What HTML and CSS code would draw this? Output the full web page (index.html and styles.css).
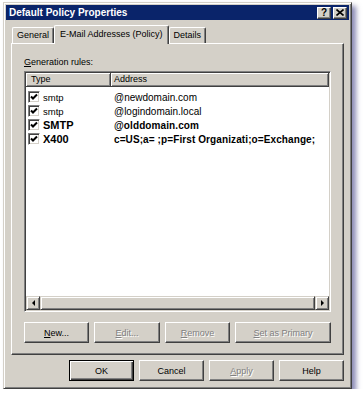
FILE: index.html
```html
<!DOCTYPE html>
<html lang="en">
<head>
	<meta charset="UTF-8">
	<title>Default Policy Properties</title>
	<link rel="stylesheet" href="styles.css">
</head>
<body>

	<div class="window">
		<div class="titlebar">
			<span class="title">Default Policy Properties</span>
			<span class="caption">
				<span class="cbtn">?</span>
				<span class="cbtn">
					<svg width="8" height="7" viewBox="0 0 8 7"><path d="M0.5 0.5 L7.5 6.5 M7.5 0.5 L0.5 6.5" stroke="#000" stroke-width="1.6"/></svg>
				</span>
			</span>
		</div>

		<div class="content">
			<div class="tabs">
				<div class="tab">General</div>
				<div class="tab active">E-Mail Addresses (Policy)</div>
				<div class="tab">Details</div>
			</div>

			<div class="panel">
				<div class="label"><u>G</u>eneration rules:</div>

				<div class="listview">
					<div class="lv-header">
						<div class="col col-type">Type</div>
						<div class="col col-addr">Address</div>
					</div>

					<div class="lv-rows">
						<div class="row">
							<div class="cell-type"><span class="check"></span>smtp</div>
							<div class="cell-addr">@newdomain.com</div>
						</div>
						<div class="row">
							<div class="cell-type"><span class="check"></span>smtp</div>
							<div class="cell-addr">@logindomain.local</div>
						</div>
						<div class="row bold">
							<div class="cell-type"><span class="check"></span>SMTP</div>
							<div class="cell-addr">@olddomain.com</div>
						</div>
						<div class="row bold">
							<div class="cell-type"><span class="check"></span>X400</div>
							<div class="cell-addr">c=US;a= ;p=First Organizati;o=Exchange;</div>
						</div>
					</div>

					<div class="hscroll">
						<div class="sb-btn"><span class="arrow-left"></span></div>
						<div class="sb-thumb"></div>
						<div class="sb-btn"><span class="arrow-right"></span></div>
					</div>
				</div>

				<div class="panel-buttons">
					<div class="btn w-new"><u>N</u>ew...</div>
					<div class="btn w-edit disabled"><u>E</u>dit...</div>
					<div class="btn w-remove disabled"><u>R</u>emove</div>
					<div class="btn w-primary disabled"><u>S</u>et as Primary</div>
				</div>
			</div>

			<div class="dialog-buttons">
				<div class="btn default">OK</div>
				<div class="btn">Cancel</div>
				<div class="btn disabled"><u>A</u>pply</div>
				<div class="btn">Help</div>
			</div>
		</div>
	</div>

</body>
</html>
```

FILE: styles.css
```css
* {
	box-sizing: border-box;
}

body {
	margin: 0;
	padding: 2px 0 0 3px;
	background: #fff;
	font-family: "Liberation Sans", Arial, sans-serif;
	font-size: 9px;
	color: #000;
}

/********** window frame **********/
.window {
	width: 349px;
	height: 387px;
	padding: 2px;
	background: #d4d0c8;
	border: 1px solid;
	border-color: #d4d0c8 #404040 #404040 #d4d0c8;
	box-shadow: inset 1px 1px #fff, inset -1px -1px #808080, 4px 4px 5px rgba(60, 60, 130, 0.6);
}

.titlebar {
	display: flex;
	align-items: center;
	justify-content: space-between;
	height: 15px;
	padding: 0 2px 0 3px;
	background: #0a246a;
	color: #fff;
	font-size: 10px;
	font-weight: bold;
}

.caption {
	display: flex;
	gap: 2px;
}

.cbtn {
	display: flex;
	align-items: center;
	justify-content: center;
	width: 14px;
	height: 12px;
	background: #d4d0c8;
	color: #000;
	font-size: 10px;
	border: 1px solid;
	border-color: #fff #404040 #404040 #fff;
	box-shadow: inset -1px -1px #808080;
}

.content {
	padding: 5px 5px 0 5px;
}

/********** tabs **********/
.tabs {
	position: relative;
	z-index: 1;
	display: flex;
	align-items: flex-end;
	height: 18px;
	padding-left: 1px;
}

.tab {
	height: 16px;
	padding: 0 4px;
	line-height: 15px;
	border-top: 1px solid #fff;
	border-left: 1px solid #fff;
	border-right: 1px solid #404040;
	border-radius: 2px 2px 0 0;
	box-shadow: inset -1px 0 #808080;
}

.tab.active {
	height: 19px;
	margin-bottom: -1px;
	padding: 0 5px;
	line-height: 16px;
	background: #d4d0c8;
}

.panel {
	height: 312px;
	padding: 13px 12px 0 12px;
	border: 1px solid;
	border-color: #fff #404040 #404040 #fff;
	box-shadow: inset -1px -1px #808080;
}

.label {
	line-height: 11px;
	margin-bottom: 3px;
}

/********** list view **********/
.listview {
	display: flex;
	flex-direction: column;
	height: 241px;
	background: #fff;
	border: 1px solid;
	border-color: #808080 #fff #fff #808080;
	box-shadow: inset 1px 1px #404040, inset -1px -1px #d4d0c8;
	padding: 1px;
}

.lv-header {
	display: flex;
	height: 14px;
	background: #d4d0c8;
}

.col {
	line-height: 12px;
	border-right: 1px solid #404040;
	border-bottom: 1px solid #404040;
	box-shadow: inset 1px 1px #fff, inset -1px -1px #808080;
}

.col-type {
	width: 85px;
	padding-left: 5px;
}

.col-addr {
	flex: 1;
	padding-left: 3px;
}

.lv-rows {
	flex: 1;
	padding-top: 3px;
}

.row {
	display: flex;
	align-items: center;
	height: 14px;
	font-size: 9.5px;
}

.row .cell-addr {
	font-size: 10px;
}

.row.bold {
	font-weight: bold;
	font-size: 11px;
}

.row.bold .cell-addr {
	font-size: 10px;
	letter-spacing: 0.1px;
}

.cell-type {
	display: flex;
	align-items: center;
	width: 85px;
	padding-left: 2px;
}

.cell-addr {
	padding-left: 3px;
	white-space: nowrap;
}

.check {
	flex: none;
	width: 12px;
	height: 12px;
	margin-right: 3px;
	border: 1px solid;
	border-color: #808080 #fff #fff #808080;
	box-shadow: inset 1px 1px #404040, inset -1px -1px #d4d0c8;
	background: #fff url("data:image/svg+xml,%3Csvg xmlns='http://www.w3.org/2000/svg' width='10' height='10'%3E%3Cpath d='M2 4.5 L4 6.5 L8 2.5' fill='none' stroke='%23000' stroke-width='2'/%3E%3C/svg%3E") center no-repeat;
}

.hscroll {
	display: flex;
	height: 14px;
	background: #e8e6e2;
}

.sb-btn,
.sb-thumb {
	background: #d4d0c8;
	border: 1px solid;
	border-color: #d4d0c8 #404040 #404040 #d4d0c8;
	box-shadow: inset 1px 1px #fff, inset -1px -1px #808080;
}

.sb-btn {
	display: flex;
	align-items: center;
	justify-content: center;
	width: 14px;
}

.sb-thumb {
	flex: 1;
}

.arrow-left {
	border-top: 3px solid transparent;
	border-bottom: 3px solid transparent;
	border-right: 3px solid #000;
}

.arrow-right {
	border-top: 3px solid transparent;
	border-bottom: 3px solid transparent;
	border-left: 3px solid #000;
}

/********** buttons **********/
.btn {
	display: flex;
	align-items: center;
	justify-content: center;
	width: 65px;
	height: 21px;
	background: #d4d0c8;
	border: 1px solid;
	border-color: #fff #404040 #404040 #fff;
	box-shadow: inset -1px -1px #808080;
}

.btn.disabled {
	color: #808080;
	text-shadow: 1px 1px #fff;
}

.btn.default {
	border-color: #000;
	box-shadow: inset 1px 1px #fff, inset -1px -1px #404040, inset -2px -2px #808080;
}

.panel-buttons {
	display: flex;
	gap: 5px;
	margin-top: 10px;
}

.w-edit {
	width: 66px;
}

.w-primary {
	flex: 1;
}

.dialog-buttons {
	display: flex;
	justify-content: flex-end;
	gap: 5px;
	margin-top: 5px;
}
```
